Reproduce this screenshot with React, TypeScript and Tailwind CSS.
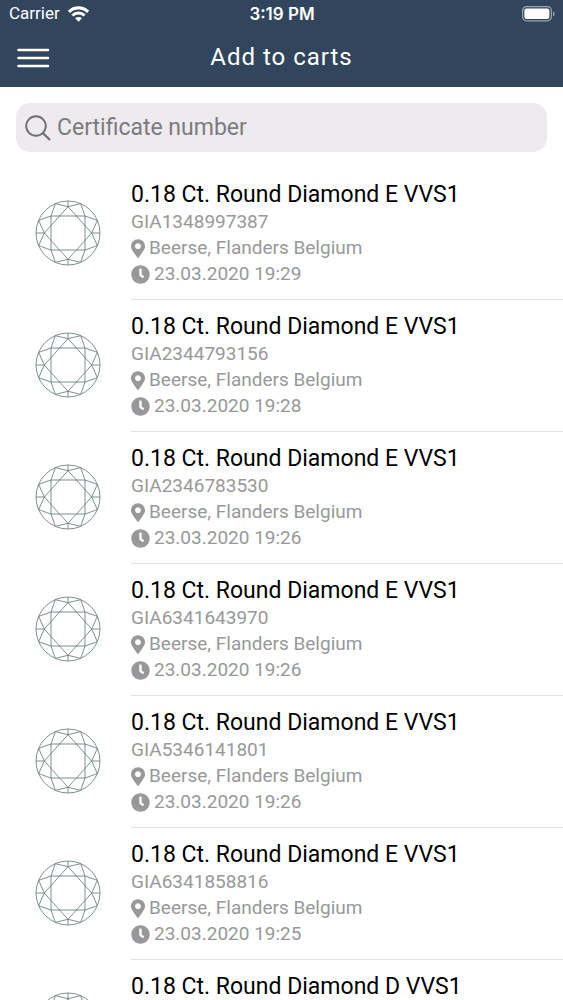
import { FaClock, FaMapMarkerAlt } from "react-icons/fa";

const items = [
  { title: "0.18 Ct. Round Diamond E VVS1", number: "GIA1348997387", date: "23.03.2020 19:29" },
  { title: "0.18 Ct. Round Diamond E VVS1", number: "GIA2344793156", date: "23.03.2020 19:28" },
  { title: "0.18 Ct. Round Diamond E VVS1", number: "GIA2346783530", date: "23.03.2020 19:26" },
  { title: "0.18 Ct. Round Diamond E VVS1", number: "GIA6341643970", date: "23.03.2020 19:26" },
  { title: "0.18 Ct. Round Diamond E VVS1", number: "GIA5346141801", date: "23.03.2020 19:26" },
  { title: "0.18 Ct. Round Diamond E VVS1", number: "GIA6341858816", date: "23.03.2020 19:25" },
  { title: "0.18 Ct. Round Diamond D VVS1", number: "", date: "" },
];

type Item = (typeof items)[number];

function WifiIcon() {
  return (
    <svg width="21" height="16" viewBox="0 0 20 15" aria-hidden="true">
      <g fill="none" stroke="white" strokeWidth="2.9">
        <path d="M0.9 5.4a13 13 0 0 1 18.2 0" />
        <path d="M4.2 8.9a8.3 8.3 0 0 1 11.6 0" />
      </g>
      <path d="M10 14.8 6.8 11.6a4.6 4.6 0 0 1 6.4 0Z" fill="white" />
    </svg>
  );
}

function BatteryIcon() {
  return (
    <svg width="33" height="16" viewBox="0 0 33 16" aria-hidden="true">
      <rect x="0.6" y="0.6" width="28.8" height="14.2" rx="4" fill="none" stroke="#98a4b1" strokeWidth="1.2" />
      <rect x="2.4" y="2.4" width="25" height="10.6" rx="2.2" fill="white" />
      <path d="M31 5.2c2.2.8 2.2 4.2 0 5Z" fill="#98a4b1" />
    </svg>
  );
}

function DiamondIcon() {
  return (
    <svg
      className="mb-0.5"
      width="66"
      height="66"
      viewBox="-99 -99 198 198"
      fill="none"
      stroke="#586f70"
      strokeWidth="2.3"
      aria-hidden="true"
    >
      <circle r="96" />
      <path d="M-51-51H51V51H-51Z" />
      <path d="M0-79 71 0 0 79-71 0Z" />
      <path d="M0-96V-79M0 96V79M-96 0H-71M96 0H71" />
      <path d="M0-79-38-88-51-51-88-38-71 0-88 38-51 51-38 88 0 79 38 88 51 51 88 38 71 0 88-38 51-51 38-88Z" />
    </svg>
  );
}

function Header() {
  return (
    <header className="bg-[#31465d] text-white">
      <div className="grid grid-cols-3 items-center h-7 pl-[9px] pr-2">
        <div className="flex items-center gap-2 text-[17px]">
          <span>Carrier</span>
          <WifiIcon />
        </div>
        <span className="pt-0.5 text-center text-[17px] font-semibold font-['Inter',sans-serif]">3:19 PM</span>
        <div className="flex justify-end">
          <BatteryIcon />
        </div>
      </div>
      <div className="grid grid-cols-[48px_1fr_48px] items-center h-[59px] px-4">
        <button type="button" aria-label="Menu">
          <svg width="34" height="22" viewBox="0 0 34 22" stroke="white" strokeWidth="2.6" strokeLinecap="round">
            <path d="M2.5 3H32M2.5 11H32M2.5 19H32" />
          </svg>
        </button>
        <h1 className="pb-0.5 text-center text-2xl tracking-[1px]">Add to carts</h1>
      </div>
    </header>
  );
}

function Search() {
  return (
    <label className="flex items-center gap-[5px] h-[49px] m-4 px-2 rounded-[14px] bg-[#edebee]">
      <svg width="28" height="28" viewBox="0 0 28 28" fill="none" stroke="#6f6f73" strokeWidth="1.9" aria-hidden="true">
        <circle cx="12" cy="12" r="9.8" />
        <path d="m18.8 19 7.2 7" strokeWidth="2.3" />
      </svg>
      <input
        type="text"
        aria-label="Certificate number"
        placeholder="Certificate number"
        className="flex-1 min-w-0 pt-0.5 bg-transparent text-[23px] outline-none placeholder:text-[#7d7b7f]"
      />
    </label>
  );
}

function Row({ item }: { item: Item }) {
  return (
    <li className="flex items-center pl-[35px]">
      <DiamondIcon />
      <div className="flex-1 min-h-[132px] ml-[30px] py-3 border-b border-[#e2e2e2] text-[19px] leading-[26px] text-[#98989a]">
        <h2 className="text-[23px] leading-[29px] text-black">{item.title}</h2>
        {item.number && (
          <>
            <p>{item.number}</p>
            <p className="flex items-center gap-1">
              <FaMapMarkerAlt className="w-[14px] h-[19px]" />
              Beerse, Flanders Belgium
            </p>
            <p className="flex items-center gap-1">
              <FaClock className="size-[19px]" />
              {item.date}
            </p>
          </>
        )}
      </div>
    </li>
  );
}

export default function App() {
  return (
    <div className="h-screen overflow-hidden bg-white font-['Roboto',sans-serif]">
      <Header />
      <Search />
      <ul>
        {items.map((item, i) => (
          <Row key={i} item={item} />
        ))}
      </ul>
    </div>
  );
}
